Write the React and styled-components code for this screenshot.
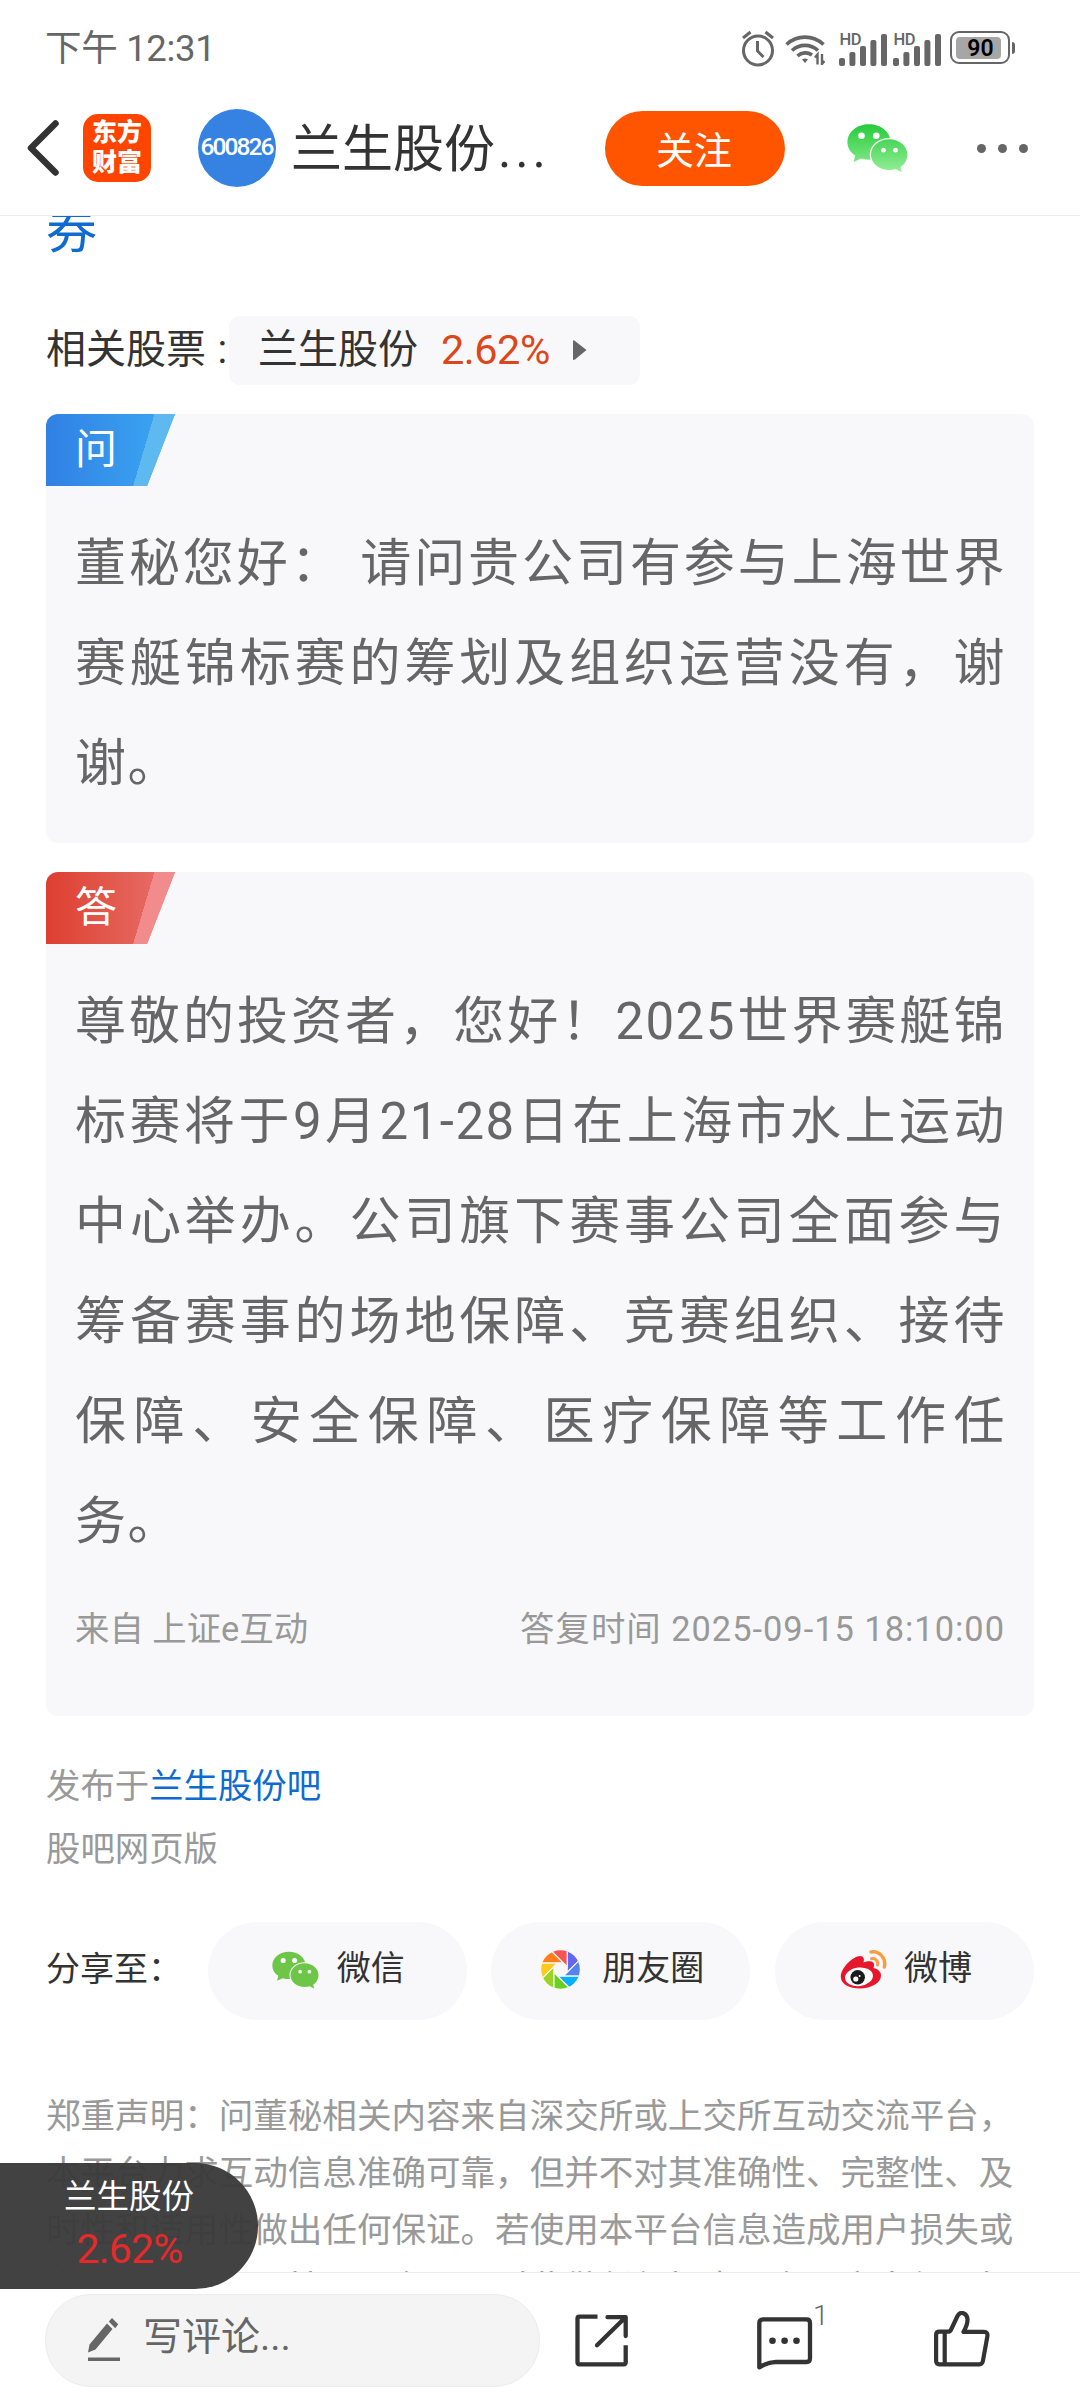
import React from "react";
import styled, { createGlobalStyle } from "styled-components";

const colors = {
  text: "#333333",
  textBody: "#666666",
  textLight: "#999999",
  link: "#0f6bcf",
  orange: "#ff5500",
  red: "#dc4619",
  panel: "#f8f8fa",
  line: "#ededed",
};

const GlobalStyle = createGlobalStyle`
  * {
    box-sizing: border-box;
  }
  body {
    margin: 0;
    background: #ffffff;
    font-family: Roboto, "Noto Sans CJK SC", sans-serif;
    color: ${colors.text};
  }
`

const Page = styled.div`
  position: relative;
  width: 1080px;
  height: 2408px;
  display: flex;
  flex-direction: column;
  overflow: hidden;
  background: #ffffff;
`

/* status bar */
const StatusBar = styled.div`
  flex: none;
  height: 93px;
  padding: 0 63px 0 45px;
  display: flex;
  align-items: center;
  justify-content: space-between;
`

const Clock = styled.span`
  font-size: 36.5px;
  line-height: 50px;
  letter-spacing: -0.3px;
  padding-top: 5px;
  color: ${colors.textBody};
`

const StatusIcons = styled.div`
  display: flex;
  align-items: center;
  padding-top: 4px;
`

const SignalBox = styled.svg`
  margin-left: ${(props) => props.$gap}px;
  overflow: visible;
`

const WifiBox = styled.svg`
  margin-left: 10px;
`

const Battery = styled.div`
  position: relative;
  width: 60px;
  height: 33px;
  margin: -2px 7px 0 9px;
  padding: 4px;
  border: 2px solid ${colors.textBody};
  border-radius: 9px;

  &::after {
    content: "";
    position: absolute;
    right: -7px;
    top: 9px;
    width: 3px;
    height: 12px;
    border-radius: 0 3px 3px 0;
    background: ${colors.textBody};
  }
`

const BatteryLevel = styled.div`
  width: 45px;
  height: 22px;
  padding-left: 4px;
  border-radius: 4px;
  background: #a6a6a6;
  color: #000000;
  font-size: 23px;
  line-height: 23px;
  font-weight: 600;
  text-align: center;
`

/* header */
const Header = styled.header`
  flex: none;
  height: 123px;
  display: flex;
  align-items: center;
  padding: 0 52px 12px 26px;
  border-bottom: 1px solid ${colors.line};
`

const AppLogo = styled.div`
  width: 68px;
  height: 68px;
  margin-left: 24px;
  border-radius: 15px;
  background: #ff4400;
  color: #ffffff;
  font-size: 25px;
  font-weight: 900;
  line-height: 30px;
  text-align: center;
  padding-top: 4px;
`

const StockAvatar = styled.div`
  width: 78px;
  height: 78px;
  margin-left: 47px;
  padding-right: 1px;
  border-radius: 50%;
  background: #3582e3;
  color: #ffffff;
  font-size: 24.5px;
  font-weight: 500;
  letter-spacing: -1.9px;
  line-height: 76px;
  text-align: center;
`

const StockTitle = styled.h1`
  margin: 0 0 0 15px;
  padding-top: 4px;
  width: 314px;
  font-size: 51px;
  font-weight: 400;
  line-height: 70px;
  white-space: nowrap;
`

const Ellipsis = styled.span`
  margin-left: 3px;
  letter-spacing: 3.8px;
`

const FollowButton = styled.button`
  width: 180px;
  height: 75px;
  padding: 0 2px 2px 0;
  border: 0;
  border-radius: 38px;
  background: ${colors.orange};
  color: #ffffff;
  font: inherit;
  font-size: 38px;
`

const WechatSlot = styled.div`
  display: flex;
  margin: 0 0 0 62px;
`

const MoreDots = styled.div`
  display: flex;
  gap: 12px;
  margin-left: auto;

  i {
    width: 9px;
    height: 9px;
    border-radius: 50%;
    background: ${colors.textBody};
  }
`

/* article */
const Content = styled.main`
  flex: 1;
  min-height: 0;
  overflow: hidden;
  padding: 0 46px;
`

const ArticleTitle = styled.h2`
  margin: -20px 0 0;
  font-size: 51px;
  line-height: 70px;
  font-weight: 400;
  color: ${colors.link};
`

const RelatedRow = styled.div`
  display: flex;
  align-items: center;
  height: 69px;
  margin-top: 50px;
  font-size: 40px;
  line-height: 66px;
`

const RelatedLabel = styled.span`
  width: 183px;
  white-space: nowrap;
  padding-bottom: 2px;
  word-spacing: 1.5px;
`

const StockChip = styled.div`
  width: 411px;
  height: 69px;
  display: flex;
  align-items: center;
  padding: 0 0 2px 29px;
  border-radius: 11px;
  background: ${colors.panel};
`

const ChipRate = styled.span`
  margin: 0 23px 0 23px;
  font-size: 41.5px;
  letter-spacing: -0.5px;
  color: ${colors.red};
`

const Card = styled.section`
  height: ${(props) => props.$height}px;
  margin-top: 29px;
  border-radius: 12px;
  background: ${colors.panel};
  overflow: hidden;
`

const Badge = styled.div`
  width: 129px;
  height: 72px;
  padding-left: 29px;
  font-size: 42px;
  line-height: 71px;
  color: #ffffff;
  background: ${(props) =>
    `linear-gradient(106.5deg, transparent 0 104px, ${props.$edge} 104px) , linear-gradient(90deg, ${props.$from}, ${props.$to})`};
  clip-path: polygon(0 0, 100% 0, 101px 100%, 0 100%);
`

const Paragraph = styled.p`
  margin: 28px 30px 0 29px;
  font-size: 51px;
  line-height: 100px;
  color: ${colors.textBody};
  letter-spacing: 1.5px;
`

const Line = styled.span`
  display: block;
  height: 100px;
  margin-right: -2px;
  white-space: nowrap;
  text-align: justify;
  text-align-last: ${(props) => (props.$last ? "left" : "justify")};
`

const CardMeta = styled.div`
  display: flex;
  justify-content: space-between;
  margin: 27px 29px 0 29px;
  font-size: 34.4px;
  line-height: 60px;
  color: ${colors.textLight};
`

const ReplyTime = styled.span`
  letter-spacing: ${(props) => props.$spacing}px;
`

const PostedIn = styled.div`
  margin-top: 39px;
  font-size: 34.4px;
  line-height: 63px;
  color: ${colors.textLight};

  a {
    color: ${colors.link};
  }
`

const ShareRow = styled.div`
  display: flex;
  align-items: center;
  justify-content: space-between;
  height: 98px;
  margin-top: 41px;
  font-size: 34px;
  line-height: 50px;
`

const ShareLabel = styled.span`
  width: 137px;
  white-space: nowrap;
  padding-bottom: 4px;
`

const SharePill = styled.div`
  width: 259px;
  height: 98px;
  display: flex;
  align-items: center;
  padding: 0 0 3px ${(props) => props.$pad}px;
  gap: ${(props) => props.$gap}px;
  border-radius: 49px;
  background: ${colors.panel};

  span {
    padding-bottom: 3px;
  }
`

const Disclaimer = styled.p`
  margin: 68px 0 0;
  font-size: 34.56px;
  line-height: 57.2px;
  color: ${colors.textLight};
  white-space: nowrap;

  span {
    display: block;
  }
`

/* bottom */
const BottomBar = styled.footer`
  flex: none;
  height: 136px;
  display: flex;
  align-items: flex-start;
  border-top: 1px solid ${colors.line};
  padding: 21px 0 0 45px;
`

const CommentInput = styled.div`
  width: 495px;
  height: 93px;
  display: flex;
  align-items: center;
  gap: 23px;
  padding: 0 0 2px 42px;
  border: 1px solid #ececec;
  border-radius: 46px;
  background: #f4f4f4;
  color: ${colors.textBody};
  font-size: 39px;
  line-height: 60px;

  span {
    padding-bottom: 5px;
  }
`

const ToolIcon = styled.div`
  position: relative;
  display: flex;
  margin: ${(props) => props.$top}px 0 0 ${(props) => props.$left}px;
`

const CommentCount = styled.span`
  position: absolute;
  left: 56px;
  top: -17px;
  font-size: 28px;
  line-height: 32px;
  font-weight: 300;
  color: ${colors.textBody};
`

const FloatingStock = styled.aside`
  position: absolute;
  left: 0;
  top: 2163px;
  width: 258px;
  height: 126px;
  padding-top: 9px;
  border-radius: 0 63px 63px 0;
  background: rgba(58, 58, 58, 0.96);
  color: #ffffff;
  text-align: center;
  font-size: 32.5px;
  line-height: 50px;

  strong {
    display: block;
    margin-top: 2px;
    padding-left: 1px;
    font-size: 41px;
    font-weight: 400;
    letter-spacing: -0.8px;
    color: #e42a2a;
  }
`

const AlarmIcon = () => (
  <svg width="34" height="37" viewBox="0 0 34 37" fill="none" stroke="#666" strokeWidth="3">
    <circle cx="17" cy="20.5" r="14.5" />
    <path d="M16.5 11v10l6 6M2 8l7.5-6M32 8l-7.5-6" />
  </svg>
)

const WifiIcon = () => (
  <WifiBox width="40" height="32" viewBox="0 0 40 32" fill="none" stroke="#666" strokeWidth="3.6">
    <path d="M1.5 11.5a27 27 0 0 1 37 0M7 17.5a19 19 0 0 1 26 0M12.5 23a11.5 11.5 0 0 1 14.5-1" />
    <path d="M17 26.5q3-2 6 0l-3 3.5z" fill="#666" stroke="none" />
    <path d="M32.5 31.5V21.5l-2.500 3M37 21v10l2.500-3" strokeWidth="2.4" />
  </WifiBox>
)

const SignalIcon = ({ gap }) => (
  <SignalBox $gap={gap} width="48" height="34" viewBox="0 0 48 34" fill="#666">
    <text x="0.5" y="13" fontSize="16.5" fontWeight="500" fontFamily="Roboto" textLength="22">HD</text>
    <rect x="0" y="26" width="6" height="8" rx="2" />
    <rect x="10.4" y="20" width="6" height="14" rx="2" />
    <rect x="21" y="14" width="6" height="20" rx="2" />
    <rect x="31.4" y="8" width="6" height="26" rx="2" />
    <rect x="42" y="2" width="6" height="32" rx="2" />
  </SignalBox>
)

const BackIcon = () => (
  <svg width="33" height="56" viewBox="0 0 33 56" fill="none" stroke="#333" strokeWidth="6.5" strokeLinecap="round" strokeLinejoin="round">
    <path d="M29.5 3.5L5 28l24.5 24.5" />
  </svg>
)

const WechatIcon = ({ width, height, id, from, to, halo }) => (
  <svg width={width} height={height} viewBox="0 0 61 48">
    <defs>
      <linearGradient id={id} gradientUnits="userSpaceOnUse" x1="0" y1="0" x2="0" y2="48">
        <stop offset="0" stopColor={from} />
        <stop offset="1" stopColor={to} />
      </linearGradient>
    </defs>
    <g fill={`url(#${id})`}>
      <path d="M22 .2C10 .2.4 8 .4 18c0 5.800 3 10.500 7.800 13.600L6.600 38l7.400-3.400c2.600.8 5.200 1.100 8 1.100 12 0 21.600-7.700 21.600-17.700S34 .2 22 .2z" />
      <path
        d="M42.3 15.3C32 15.3 24 22.3 24 30.7s8 15.300 18.300 15.300c2.300 0 4.600-.3 6.500-.9l6 3-1.400-5c4.300-3 7-7.400 7-12.400 0-8.400-8-15.400-18.100-15.400z"
        stroke={halo}
        strokeWidth="2.6"
        paintOrder="stroke"
      />
    </g>
    <g fill={halo}>
      <circle cx="14.5" cy="11.7" r="3.3" />
      <circle cx="29.3" cy="11.7" r="3.3" />
      <circle cx="36.5" cy="26.2" r="2.4" />
      <circle cx="48.5" cy="26.2" r="2.4" />
    </g>
  </svg>
)

const blades = ["#6467f0", "#5283f0", "#07b0fe", "#69d020", "#9bd425", "#fecb1a", "#fe7e19", "#fa5452"]

const MomentsIcon = () => (
  <svg width="39" height="39" viewBox="-19.5 -19.5 39 39">
    <clipPath id="lens">
      <circle r="19.3" />
    </clipPath>
    <g clipPath="url(#lens)">
      {blades.map((color, i) => (
        <path
          key={color}
          d="M6.700 2.800V-30H39.500z"
          fill={color}
          stroke={colors.panel}
          strokeWidth="1.2"
          transform={`rotate(${i * 45})`}
        />
      ))}
    </g>
  </svg>
)

const WeiboIcon = () => (
  <svg width="47" height="39" viewBox="0 0 47 39" fill="none">
    <path
      fill="#e6162d"
      d="M.8 27C.8 17 14 6 20 6c4 0 4.500 3.500 3.500 6.500 4.500-2 11-2 10.500 2.500 0 1.500-.5 2.500-.5 3 4.500 1 7.500 3.500 7.500 7.500 0 7.500-10 13-21 13C9.500 38.500.8 34 .8 27z"
    />
    <ellipse cx="19" cy="26.8" rx="14" ry="9.3" fill="#fff" transform="rotate(-7 19 26.8)" />
    <circle cx="17.7" cy="27.3" r="7.2" fill="#1a1a1a" />
    <circle cx="15.8" cy="29" r="2.6" fill="#fff" />
    <circle cx="19.6" cy="26" r="1" fill="#fff" />
    <path d="M31 2c8.500-1.500 15.500 6.500 13.300 15" stroke="#f79d43" strokeWidth="3.4" strokeLinecap="round" />
    <path d="M31.500 8.700c4.200-.7 7.200 2.500 6 6.300" stroke="#f79d43" strokeWidth="3" strokeLinecap="round" />
  </svg>
)

const PencilIcon = () => (
  <svg width="32" height="44" viewBox="0 0 32 44" fill="#666">
    <path d="M19 5.500l5.500 5.500L7.500 31.500 0 34.500l1.500-8zM20.800 3.500L24 0l6.200 6.200-3 4z" />
    <rect y="39.5" width="32" height="3.5" />
  </svg>
)

const ForwardIcon = () => (
  <svg width="54" height="54" viewBox="0 0 54 54" fill="none" stroke="#333" strokeWidth="4.3" strokeLinejoin="round">
    <path d="M22.500 2.600H4.500q-2 0-2 2v43.700q0 2 2 2h44.200q2 0 2-2V31.300" />
    <path d="M32.500 3.200h18.200V22M50 3.800L22 31.200" strokeLinecap="round" />
  </svg>
)

const CommentIcon = () => (
  <svg width="56" height="54" viewBox="0 0 56 54" fill="none" stroke="#333" strokeWidth="4.3" strokeLinejoin="round">
    <path d="M2.300 50.300V6q0-3.700 3.700-3.700h43.500Q53 2.300 53 6v35.300q0 3.700-3.500 3.700H19c-7 0-10.500 1.500-16.700 5.300z" />
    <g fill="#333" stroke="none">
      <circle cx="15.5" cy="23.7" r="3.3" />
      <circle cx="27.6" cy="23.7" r="3.3" />
      <circle cx="39.5" cy="23.7" r="3.3" />
    </g>
  </svg>
)

const LikeIcon = () => (
  <svg width="57" height="56" viewBox="0 0 57 56" fill="none" stroke="#333" strokeWidth="4.2" strokeLinejoin="round">
    <path d="M5.500 20.700H14q2 0 3-2L23.500 5c2.800-5.500 9.500-3 10 3 .3 5-1.500 8.500-4 12.900H50q4 0 3.400 4.300L48.900 50q-.6 3.300-3.600 3.300H5.500q-3.400 0-3.400-3.300V24q0-3.300 3.400-3.300zM10.700 21v32" />
  </svg>
)

const question = ["董秘您好： 请问贵公司有参与上海世界", "赛艇锦标赛的筹划及组织运营没有，谢", "谢。"]

const answer = [
  "尊敬的投资者，您好！2025世界赛艇锦",
  "标赛将于9月21-28日在上海市水上运动",
  "中心举办。公司旗下赛事公司全面参与",
  "筹备赛事的场地保障、竞赛组织、接待",
  "保障、安全保障、医疗保障等工作任",
  "务。",
]

const disclaimer = [
  "郑重声明：问董秘相关内容来自深交所或上交所互动交流平台，",
  "本平台力求互动信息准确可靠，但并不对其准确性、完整性、及",
  "时性和适用性做出任何保证。若使用本平台信息造成用户损失或",
  "产生的影响及限性，平台、不对此做任何担由平台用户自行承担",
]

const TextLines = ({ lines }) => (
  <Paragraph>
    {lines.map((line, i) => (
      <Line key={line} $last={i === lines.length - 1}>{line}</Line>
    ))}
  </Paragraph>
)

const App = () => {
  return (
    <Page>
      <GlobalStyle />
      <StatusBar>
        <Clock>下午 12:31</Clock>
        <StatusIcons>
          <AlarmIcon />
          <WifiIcon />
          <SignalIcon gap={14} />
          <SignalIcon gap={6} />
          <Battery>
            <BatteryLevel>90</BatteryLevel>
          </Battery>
        </StatusIcons>
      </StatusBar>
      <Header>
        <BackIcon />
        <AppLogo>
          东方
          <br />
          财富
        </AppLogo>
        <StockAvatar>600826</StockAvatar>
        <StockTitle>
          兰生股份<Ellipsis>...</Ellipsis>
        </StockTitle>
        <FollowButton>关注</FollowButton>
        <WechatSlot>
          <WechatIcon width={61} height={48} id="wxHeader" from="#25cb39" to="#93ee97" halo="#ffffff" />
        </WechatSlot>
        <MoreDots>
          <i />
          <i />
          <i />
        </MoreDots>
      </Header>
      <Content>
        <ArticleTitle>券</ArticleTitle>
        <RelatedRow>
          <RelatedLabel>相关股票 :</RelatedLabel>
          <StockChip>
            兰生股份
            <ChipRate>2.62%</ChipRate>
            <svg width="14" height="20" viewBox="0 0 14 20">
              <path d="M0 1.500Q0-.5 2 1L13.500 10 2 19.500Q0 20.500 0 19z" fill="#666" />
            </svg>
          </StockChip>
        </RelatedRow>
        <Card $height={429}>
          <Badge $from="#3180e4" $to="#3ba9f2" $edge="#5db9ef">问</Badge>
          <TextLines lines={question} />
        </Card>
        <Card $height={844}>
          <Badge $from="#dd3f30" $to="#e8726c" $edge="#f28b8b">答</Badge>
          <TextLines lines={answer} />
          <CardMeta>
            <span>来自 上证e互动</span>
            <ReplyTime $spacing={1}>答复时间 2025-09-15 18:10:00</ReplyTime>
          </CardMeta>
        </Card>
        <PostedIn>
          发布于<a>兰生股份吧</a>
          <br />
          股吧网页版
        </PostedIn>
        <ShareRow>
          <ShareLabel>分享至：</ShareLabel>
          <SharePill $pad={64} $gap={18}>
            <WechatIcon width={47} height={38} id="wxShare" from="#6ec648" to="#6ec648" halo={colors.panel} />
            <span>微信</span>
          </SharePill>
          <SharePill $pad={50} $gap={22}>
            <MomentsIcon />
            <span>朋友圈</span>
          </SharePill>
          <SharePill $pad={65} $gap={17}>
            <WeiboIcon />
            <span>微博</span>
          </SharePill>
        </ShareRow>
        <Disclaimer>
          {disclaimer.map((line) => (
            <span key={line}>{line}</span>
          ))}
        </Disclaimer>
      </Content>
      <BottomBar>
        <CommentInput>
          <PencilIcon />
          <span>写评论...</span>
        </CommentInput>
        <ToolIcon $top={20} $left={35}>
          <ForwardIcon />
        </ToolIcon>
        <ToolIcon $top={23} $left={128}>
          <CommentIcon />
          <CommentCount>1</CommentCount>
        </ToolIcon>
        <ToolIcon $top={17} $left={121}>
          <LikeIcon />
        </ToolIcon>
      </BottomBar>
      <FloatingStock>
        兰生股份
        <strong>2.62%</strong>
      </FloatingStock>
    </Page>
  )
}

export default App;
